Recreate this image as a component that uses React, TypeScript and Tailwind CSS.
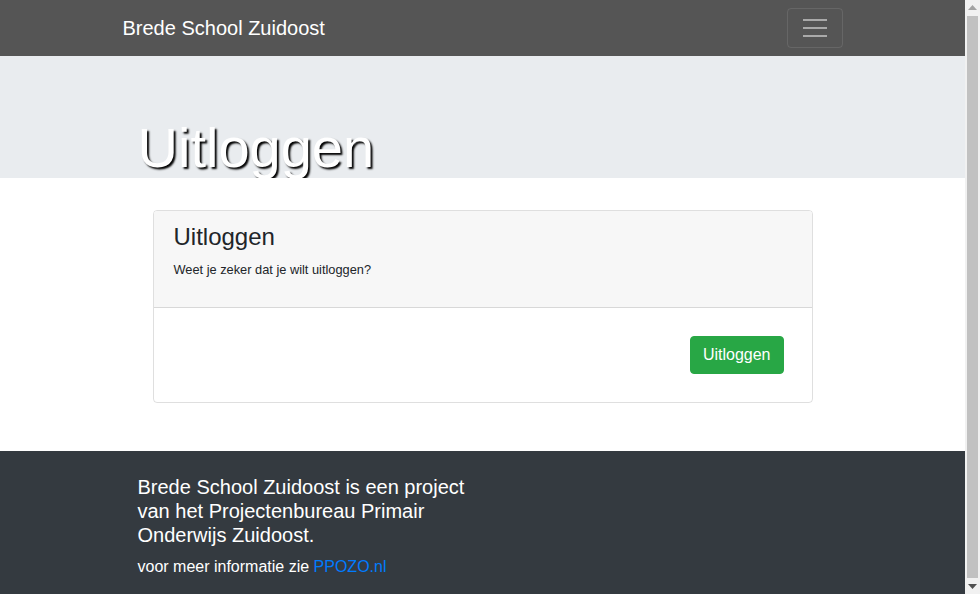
import React from "react";

function FakeScrollbar() {
  return (
    <div className="w-[15px] shrink-0 h-[594px] bg-[#f1f1f1] flex flex-col items-center">
      <div className="h-[15px] w-full flex items-center justify-center">
        <svg width="9" height="5" viewBox="0 0 9 5"><path d="M0 5 L4.5 0 L9 5 Z" fill="#a3a3a3" /></svg>
      </div>
      <div className="flex-1 w-[11px] bg-[#c1c1c1] my-[1px]"></div>
      <div className="h-[15px] w-full flex items-center justify-center">
        <svg width="9" height="5" viewBox="0 0 9 5"><path d="M0 0 L4.5 5 L9 0 Z" fill="#505050" /></svg>
      </div>
    </div>
  );
}

export default function App() {
  return (
    <div className="flex h-[594px] overflow-hidden [font-family:'Liberation_Sans',Arial,sans-serif]">
      <div className="flex-1 min-w-0 bg-white text-[#212529]">
        <nav className="bg-[#555555] h-[56px] flex items-center">
          <div className="w-[720px] mx-auto flex items-center justify-between">
            <a className="text-white text-[20px] leading-[30px]">Brede School Zuidoost</a>
            <button className="w-[56px] h-[40px] border border-white/10 rounded-[4px] flex flex-col items-center justify-center gap-[6px]">
              <span className="block w-[24px] h-[2px] bg-white/50"></span>
              <span className="block w-[24px] h-[2px] bg-white/50"></span>
              <span className="block w-[24px] h-[2px] bg-white/50"></span>
            </button>
          </div>
        </nav>
        <div className="bg-[#e9ecef] h-[122px] overflow-hidden">
          <div className="w-[720px] mx-auto px-[15px] pt-[58px]">
            <h1 className="text-white text-[56px] leading-[1.2] [text-shadow:2px_2px_2px_#000]">Uitloggen</h1>
          </div>
        </div>
        <div className="w-[720px] mx-auto px-[15px] pt-[32px] pb-[48px]">
          <div className="mx-[15px] border border-black/[0.125] rounded-[4px] overflow-hidden">
            <div className="bg-[#f7f7f7] px-[20px] pt-[12px] pb-[12px] border-b border-black/[0.125]">
              <h3 className="text-[24px] leading-[1.2] mb-[8px]">Uitloggen</h3>
              <p className="text-[12.8px] leading-[19.5px] mb-[16px]">Weet je zeker dat je wilt uitloggen?</p>
            </div>
            <div className="p-[20px] flex justify-end">
              <button className="m-[8px] bg-[#28a745] border border-[#28a745] text-white text-[16px] leading-[24px] px-[12px] py-[6px] rounded-[4px]">Uitloggen</button>
            </div>
          </div>
        </div>
        <footer className="bg-[#343a40] text-white pt-[24px] pb-[10px]">
          <div className="w-[720px] mx-auto px-[15px]">
            <div className="w-[330px]">
              <h5 className="text-[20px] leading-[1.2] mb-[8px]">Brede School Zuidoost is een project van het Projectenbureau Primair Onderwijs Zuidoost.</h5>
              <p className="text-[16px] leading-[1.5] mb-[16px]">
                voor meer informatie zie <a className="text-[#007bff]">PPOZO.nl</a>
              </p>
            </div>
          </div>
        </footer>
      </div>
      <FakeScrollbar />
    </div>
  );
}
